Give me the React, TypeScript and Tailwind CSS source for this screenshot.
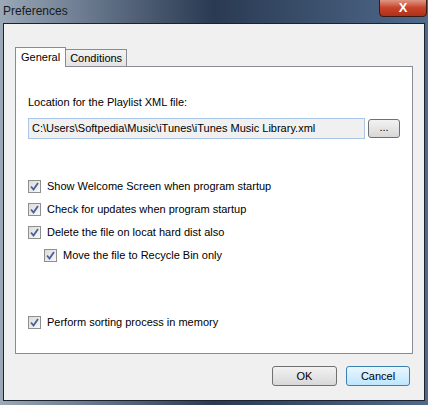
export default function App() {
  const Check = ({ label, indent }: { label: string; indent?: boolean }) => (
    <div className={`flex h-[13px] items-center gap-[6px] leading-[13px] ${indent ? "ml-[16px]" : ""}`}>
      <div className="flex h-[13px] w-[13px] items-center justify-center border border-[#8e8f8f] bg-gradient-to-br from-[#dcdcdc] to-[#f8f8f8]">
        <svg width="9" height="9" viewBox="0 0 9 9">
          <path d="M1 4.5 L3.5 7.5 L8 1" fill="none" stroke="#4a5f97" strokeWidth="1.8" />
        </svg>
      </div>
      <span>{label}</span>
    </div>
  );

  return (
    <div className="relative h-[405px] w-[428px] overflow-hidden bg-gradient-to-r from-[#9aa8b8] via-[#2a3a52] to-[#506a8c] font-['Liberation_Sans',sans-serif] text-[11px] leading-[13px] text-black">
      {/* title bar */}
      <div className="flex h-[23px] items-center justify-between">
        <span className="pl-[3px] text-[12px] text-[#1a1a1a]">Preferences</span>
        <div className="mr-[1px] -mt-[8px] flex h-[19px] w-[48px] items-center justify-center rounded-b-[4px] border border-[#3a1a14] bg-gradient-to-b from-[#e0a090] via-[#c8442c] to-[#b03018] text-[13px] font-bold text-white">
          X
        </div>
      </div>

      {/* client area */}
      <div className="mx-[3px] h-[378px] border border-[#1c2230] bg-[#f0f0f0] px-[11px] pt-[23px]">
        {/* tabs */}
        <div className="flex h-[19px] items-end">
          <div className="relative z-10 -mb-[1px] h-[20px] border border-b-0 border-[#898c95] bg-white px-[5px] pt-[3px]">General</div>
          <div className="h-[17px] border border-b-0 border-l-0 border-[#898c95] bg-gradient-to-b from-[#f2f2f2] to-[#e3e3e3] px-[4px] pt-[2px]">Conditions</div>
        </div>
        <div className="h-[288px] border border-[#898c95] bg-white px-[12px] pt-[29px]">
          <div className="mb-[9px]">Location for the Playlist XML file:</div>
          <div className="flex items-center gap-[3px]">
            <div className="flex h-[21px] w-[339px] items-center border border-[#a9c6e6] bg-[#f0f0f0] px-[3px]">
              C:\Users\Softpedia\Music\iTunes\iTunes Music Library.xml
            </div>
            <div className="flex h-[19px] w-[32px] items-center justify-center rounded-[3px] border border-[#707070] bg-gradient-to-b from-[#f2f2f2] to-[#d8d8d8] pb-[3px]">
              ...
            </div>
          </div>
          <div className="mt-[41px] flex flex-col gap-[10px]">
            <Check label="Show Welcome Screen when program startup" />
            <Check label="Check for updates when program startup" />
            <Check label="Delete the file on locat hard dist also" />
            <Check label="Move the file to Recycle Bin only" indent />
          </div>
          <div className="mt-[54px]">
            <Check label="Perform sorting process in memory" />
          </div>
        </div>
        <div className="mt-[12px] flex justify-end gap-[9px] pr-[3px]">
          <div className="flex h-[20px] w-[65px] items-center justify-center rounded-[3px] border border-[#707070] bg-gradient-to-b from-[#f2f2f2] to-[#d8d8d8]">
            OK
          </div>
          <div className="flex h-[20px] w-[64px] items-center justify-center rounded-[3px] border border-[#3c7fb1] bg-gradient-to-b from-[#eaf6fd] to-[#bee6fd]">
            Cancel
          </div>
        </div>
      </div>
    </div>
  );
}
